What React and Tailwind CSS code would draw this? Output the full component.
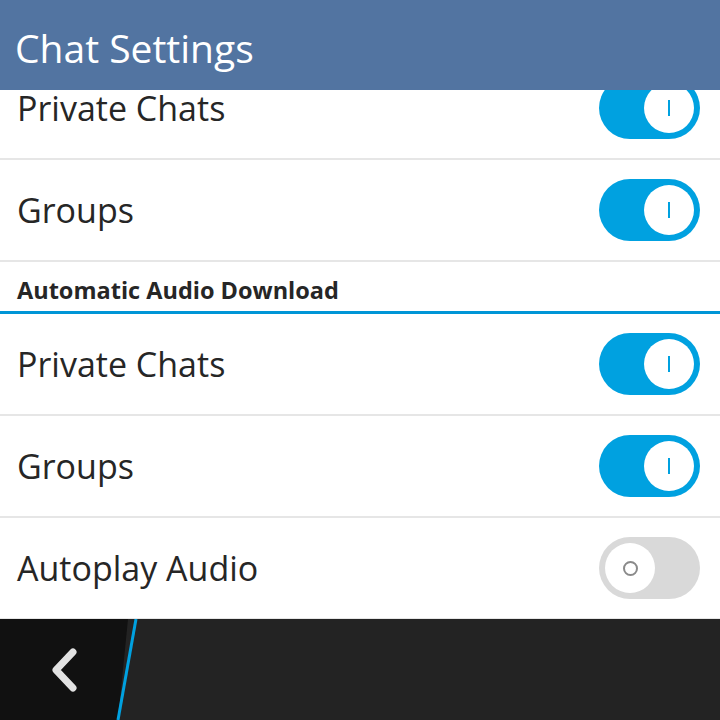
import React from "react";

const font = { fontFamily: '"Open Sans", "Liberation Sans", sans-serif' };

function Toggle({ on }) {
  if (on) {
    return (
      <div className="w-[101px] h-[62px] rounded-full bg-[#00a1e0] flex items-center justify-end pr-[6px] shrink-0">
        <div className="w-[50px] h-[50px] rounded-full bg-white flex items-center justify-center">
          <div className="w-[2px] h-[16px] bg-[#00a1e0]" />
        </div>
      </div>
    );
  }
  return (
    <div className="w-[101px] h-[62px] rounded-full bg-[#d9d9d9] flex items-center justify-start pl-[6px] shrink-0">
      <div className="w-[50px] h-[50px] rounded-full bg-white flex items-center justify-center">
        <div className="w-[15px] h-[15px] rounded-full border-2 border-[#8a8a8a]" />
      </div>
    </div>
  );
}

function Row({ label, on }) {
  return (
    <div className="h-[102px] flex items-center justify-between pl-[17px] pr-[20px] border-b-2 border-[#e6e6e6] bg-white">
      <span className="text-[34px] text-[#262626] leading-none">{label}</span>
      <Toggle on={on} />
    </div>
  );
}

export default function App() {
  return (
    <div className="w-[720px] h-[720px] flex flex-col bg-white overflow-hidden" style={font}>
      <div className="h-[90px] bg-[#5274a1] flex items-center pl-[15px] shrink-0 z-10">
        <span className="text-[39px] text-white leading-none mt-[4px]">Chat Settings</span>
      </div>
      <div className="flex-1 overflow-hidden">
        <div className="-mt-[32px]">
          <Row label="Private Chats" on />
          <Row label="Groups" on />
          <div className="h-[52px] flex items-end pl-[17px] pb-[7px] border-b-[3px] border-[#0095d6]">
            <span className="text-[23.5px] font-bold text-[#262626] leading-[28px]">Automatic Audio Download</span>
          </div>
          <Row label="Private Chats" on />
          <Row label="Groups" on />
          <Row label="Autoplay Audio" on={false} />
        </div>
      </div>
      <div className="h-[101px] shrink-0 bg-[#232323] relative overflow-hidden flex">
        <div className="w-[128px] h-full bg-[#111111] flex items-center pl-[50px]">
          <svg width="28" height="44" viewBox="0 0 28 44">
            <path d="M23 4 L6 22 L23 40" fill="none" stroke="#e2e2e2" strokeWidth="7" strokeLinecap="round" strokeLinejoin="round" />
          </svg>
        </div>
        <svg className="absolute left-0 top-0" width="160" height="101" viewBox="0 0 160 101">
          <polygon points="128,0 160,0 160,101 118,101" fill="#232323" />
          <line x1="136" y1="0" x2="118" y2="101" stroke="#00a1e0" strokeWidth="3" />
        </svg>
      </div>
    </div>
  );
}
